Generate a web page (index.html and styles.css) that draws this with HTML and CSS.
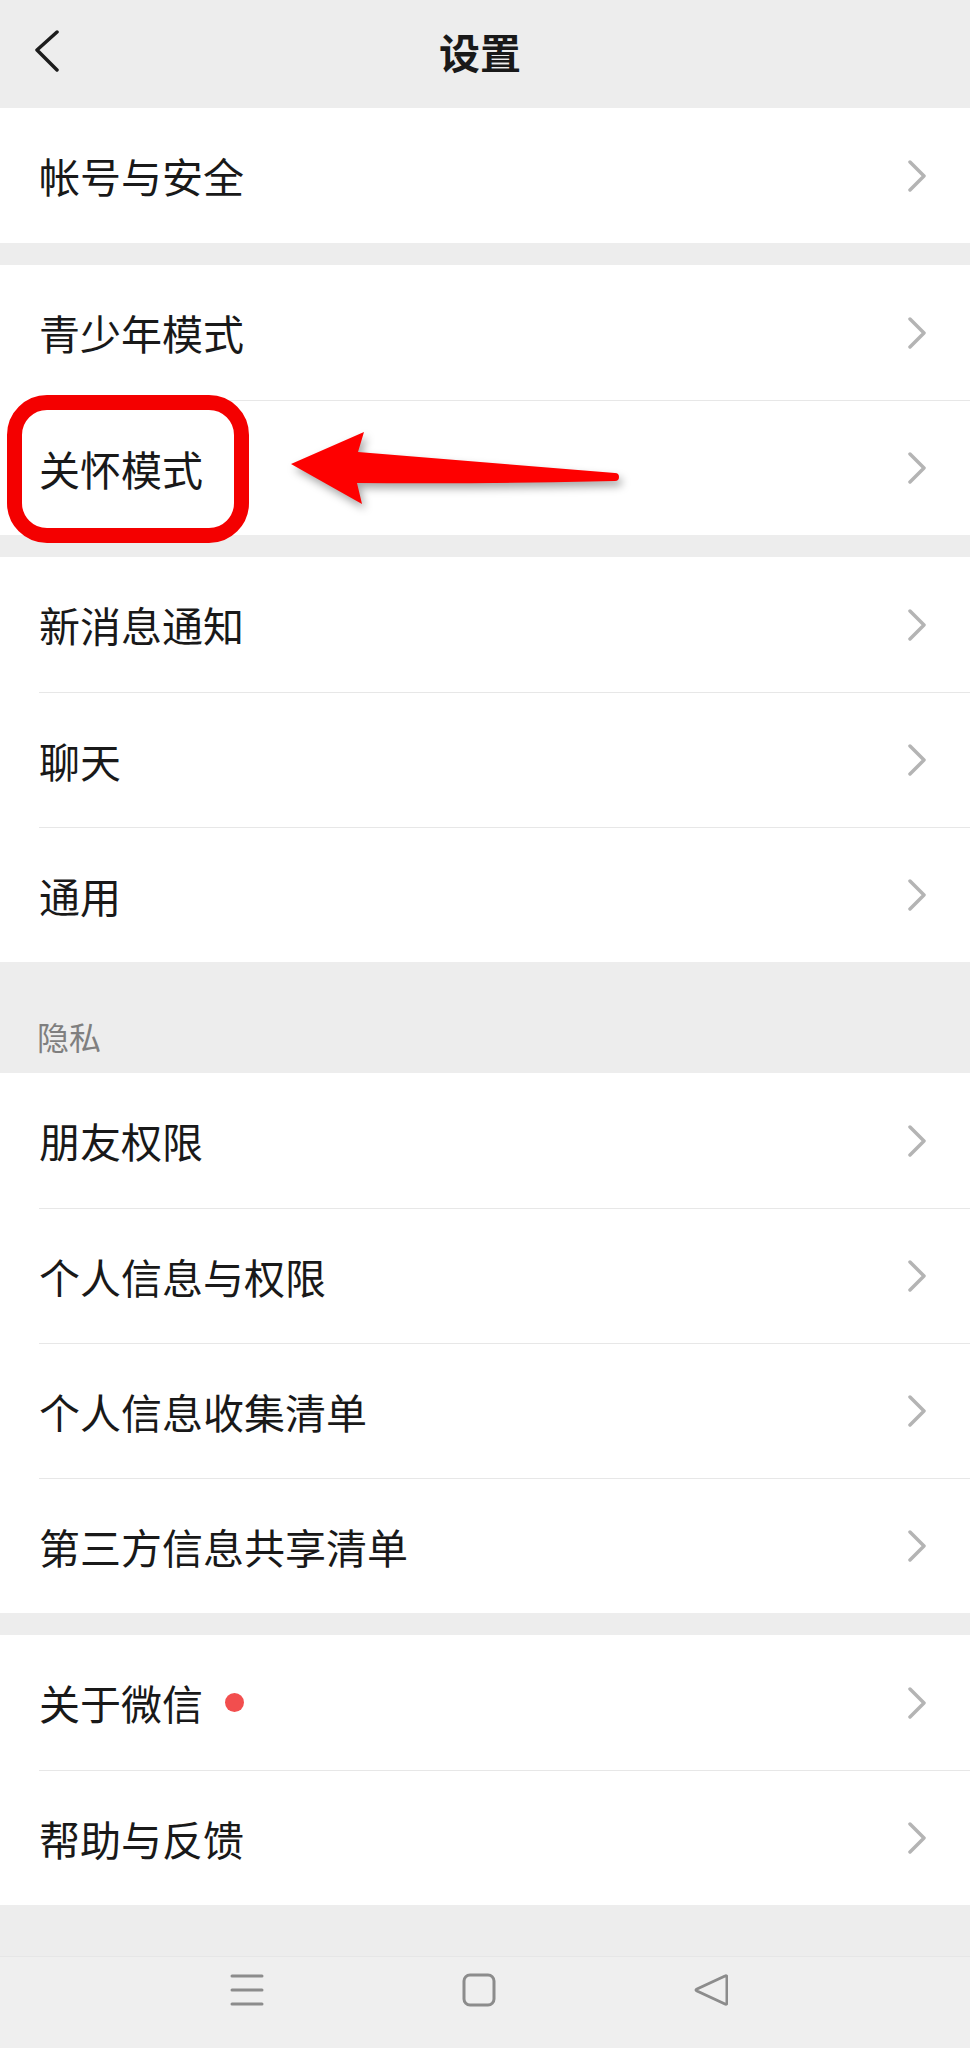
FILE: index.html
```html
<!DOCTYPE html>
<html lang="zh-CN">
<head>
    <meta charset="UTF-8">
    <meta name="viewport" content="width=device-width, initial-scale=1.0">
    <title>设置</title>
    <link rel="stylesheet" href="styles.css">
</head>
<body>
    <div class="topbar">
        <div class="topbar-left">
            <svg class="back-icon" width="26" height="42" viewBox="0 0 26 42">
                <polyline points="22,2 2,20 22,40" />
            </svg>
        </div>
        <h1 class="title">设置</h1>
        <div class="topbar-right"></div>
    </div>

    <div class="group">
        <div class="item">
            <span class="label">帐号与安全</span>
            <svg class="chevron" width="18" height="32" viewBox="0 0 18 32"><polyline points="2,2 16,16 2,30" /></svg>
        </div>
    </div>

    <div class="group">
        <div class="item">
            <span class="label">青少年模式</span>
            <svg class="chevron" width="18" height="32" viewBox="0 0 18 32"><polyline points="2,2 16,16 2,30" /></svg>
        </div>
        <div class="item marked">
            <span class="label">关怀模式</span>
            <svg class="chevron" width="18" height="32" viewBox="0 0 18 32"><polyline points="2,2 16,16 2,30" /></svg>
            <!-- red annotation drawn over the row -->
            <div class="mark-box"></div>
            <svg class="mark-arrow" width="350" height="100" viewBox="280 420 350 100">
                <path d="M291 463 L364 431 L358 451 Q480 461 615 472 A4 4 0 0 1 615 480 Q480 483 357 482 L362 503 Z" />
            </svg>
        </div>
    </div>

    <div class="group">
        <div class="item">
            <span class="label">新消息通知</span>
            <svg class="chevron" width="18" height="32" viewBox="0 0 18 32"><polyline points="2,2 16,16 2,30" /></svg>
        </div>
        <div class="item">
            <span class="label">聊天</span>
            <svg class="chevron" width="18" height="32" viewBox="0 0 18 32"><polyline points="2,2 16,16 2,30" /></svg>
        </div>
        <div class="item">
            <span class="label">通用</span>
            <svg class="chevron" width="18" height="32" viewBox="0 0 18 32"><polyline points="2,2 16,16 2,30" /></svg>
        </div>
    </div>

    <div class="section-title">隐私</div>
    <div class="group">
        <div class="item">
            <span class="label">朋友权限</span>
            <svg class="chevron" width="18" height="32" viewBox="0 0 18 32"><polyline points="2,2 16,16 2,30" /></svg>
        </div>
        <div class="item">
            <span class="label">个人信息与权限</span>
            <svg class="chevron" width="18" height="32" viewBox="0 0 18 32"><polyline points="2,2 16,16 2,30" /></svg>
        </div>
        <div class="item">
            <span class="label">个人信息收集清单</span>
            <svg class="chevron" width="18" height="32" viewBox="0 0 18 32"><polyline points="2,2 16,16 2,30" /></svg>
        </div>
        <div class="item">
            <span class="label">第三方信息共享清单</span>
            <svg class="chevron" width="18" height="32" viewBox="0 0 18 32"><polyline points="2,2 16,16 2,30" /></svg>
        </div>
    </div>

    <div class="group">
        <div class="item">
            <span class="label">关于微信</span>
            <span class="red-dot"></span>
            <svg class="chevron" width="18" height="32" viewBox="0 0 18 32"><polyline points="2,2 16,16 2,30" /></svg>
        </div>
        <div class="item">
            <span class="label">帮助与反馈</span>
            <svg class="chevron" width="18" height="32" viewBox="0 0 18 32"><polyline points="2,2 16,16 2,30" /></svg>
        </div>
    </div>

    <div class="navbar">
        <svg class="nav-icon" width="34" height="34" viewBox="0 0 34 34">
            <line x1="2" y1="3" x2="32" y2="3" />
            <line x1="2" y1="17" x2="32" y2="17" />
            <line x1="2" y1="31" x2="32" y2="31" />
        </svg>
        <svg class="nav-icon" width="34" height="34" viewBox="0 0 34 34">
            <rect x="2" y="2" width="30" height="30" rx="6" />
        </svg>
        <svg class="nav-icon" width="34" height="34" viewBox="0 0 34 34">
            <path d="M31 3 Q33 2 33 5 L33 29 Q33 32 31 31 L3 18 Q1 17 3 16 Z" />
        </svg>
    </div>
</body>
</html>
```

FILE: styles.css
```css
body {
    margin: 0;
    padding: 0;
    background-color: #ededed;
    font-family: "Noto Sans CJK SC", "Noto Sans", sans-serif;
    color: #191919;
    min-height: 100vh;
    display: flex;
    flex-direction: column;
}

.topbar {
    height: 108px;
    box-sizing: border-box;
    padding-bottom: 6px;
    display: grid;
    grid-template-columns: 1fr auto 1fr;
    align-items: center;
    background-color: #ededed;
}

.topbar-left {
    padding-left: 35px;
    display: flex;
    align-items: center;
}

.back-icon polyline {
    fill: none;
    stroke: #1c1c1c;
    stroke-width: 3.5;
    stroke-linecap: round;
    stroke-linejoin: round;
}

.title {
    margin: 0;
    font-size: 41px;
    font-weight: 700;
    line-height: 1;
    padding-right: 10px;
}

.group {
    background-color: #fff;
    margin-bottom: 22px;
}

.item {
    position: relative;
    height: 135px;
    box-sizing: border-box;
    margin-left: 39px;
    padding-right: 44px;
    display: flex;
    align-items: center;
}

.item + .item {
    border-top: 1px solid #e7e7e7;
}

.label {
    font-size: 41px;
    line-height: 1;
}

.chevron {
    margin-left: auto;
}

.chevron polyline {
    fill: none;
    stroke: #b4b4b4;
    stroke-width: 3.5;
    stroke-linecap: round;
    stroke-linejoin: round;
}

.red-dot {
    width: 19px;
    height: 19px;
    border-radius: 50%;
    background-color: #f24e4e;
    margin-left: 22px;
}

.section-title {
    height: 111px;
    box-sizing: border-box;
    margin-top: -22px;
    padding: 0 37px 14px;
    display: flex;
    align-items: flex-end;
    font-size: 32px;
    color: #7f7f7f;
}

.mark-box {
    position: absolute;
    left: -32px;
    top: -6px;
    width: 242px;
    height: 148px;
    box-sizing: border-box;
    border: 15px solid #f40000;
    border-radius: 40px;
}

.mark-arrow {
    position: absolute;
    left: 241px;
    top: 20px;
    filter: drop-shadow(3px 5px 4px rgba(0, 0, 0, 0.35));
}

.mark-arrow path {
    fill: #fe0000;
}

.navbar {
    margin-top: auto;
    height: 92px;
    border-top: 1px solid #e6e6e6;
    background-color: #efefef;
    display: flex;
    justify-content: center;
    align-items: center;
    gap: 198px;
    padding-right: 13px;
    padding-bottom: 26px;
    box-sizing: border-box;
}

.nav-icon line,
.nav-icon rect,
.nav-icon path {
    fill: none;
    stroke: #8c8c8c;
    stroke-width: 3;
    stroke-linecap: round;
    stroke-linejoin: round;
}
```
